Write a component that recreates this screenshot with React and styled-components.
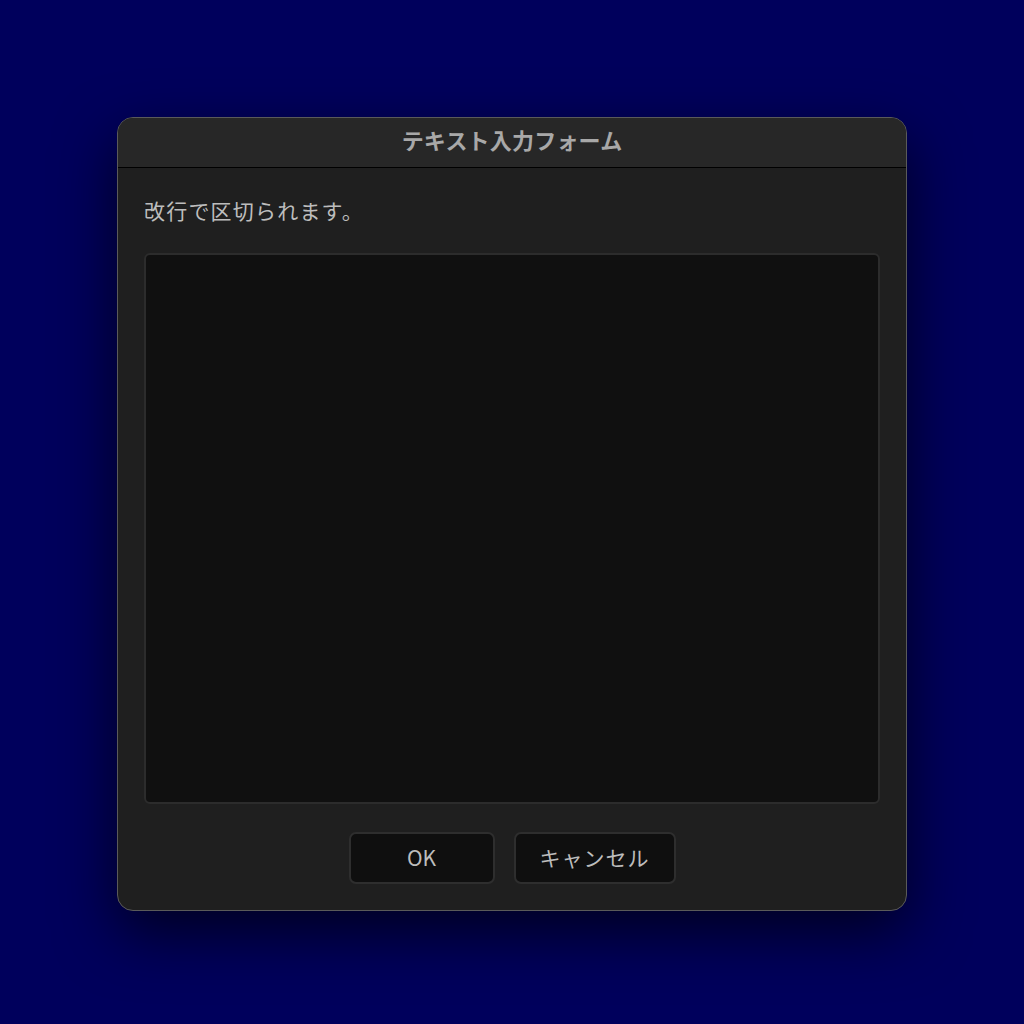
import React, { useState } from 'react';
import styled, { createGlobalStyle } from 'styled-components';

const GlobalStyle = createGlobalStyle`
    html, body {
        margin: 0;
        padding: 0;
        background: #00005c;
        font-family: "Noto Sans CJK JP", "Noto Sans", sans-serif;
    }
`;

const Screen = styled.div`
    min-height: 100vh;
    box-sizing: border-box;
    padding-top: 3px;
    display: flex;
    align-items: center;
    justify-content: center;
`;

const Dialog = styled.div`
    width: 790px;
    box-sizing: border-box;
    background: #1f1f1f;
    border: 1px solid #5a5a5a;
    border-radius: 16px;
    overflow: hidden;
    box-shadow: 0 22px 60px rgba(0, 0, 0, 0.65);
`;

const Header = styled.div`
    height: 50px;
    box-sizing: border-box;
    padding-bottom: 6px;
    display: flex;
    align-items: center;
    justify-content: center;
    background: #272727;
    border-bottom: 1px solid #000;
`;

const Title = styled.h1`
    margin: 0;
    font-size: 22px;
    font-weight: 700;
    color: #a8a8a8;
    letter-spacing: 0.2px;
`;

const Body = styled.div`
    padding: 30px 26px 26px;
    display: flex;
    flex-direction: column;
`;

const Hint = styled.p`
    margin: 0;
    font-size: 21px;
    line-height: 24px;
    letter-spacing: 1.2px;
    color: #bdbdbd;
`;

const TextBox = styled.textarea`
    margin-top: 31px;
    height: 551px;
    box-sizing: border-box;
    resize: none;
    background: #101010;
    border: 2px solid #2c2c2c;
    border-radius: 6px;
    color: #ddd;
    font: inherit;
    font-size: 18px;
    padding: 10px;
    outline: none;
`;

const Actions = styled.div`
    margin-top: 28px;
    display: flex;
    justify-content: center;
    gap: 19px;
`;

const Button = styled.button`
    width: ${p => p.$width}px;
    height: 52px;
    padding: 0 0 2px;
    background: #0f0f0f;
    border: 2px solid #2e2e2e;
    border-radius: 7px;
    color: #bdbdbd;
    font-family: inherit;
    font-size: 21px;
    letter-spacing: ${p => p.$spacing || 0}px;
    cursor: pointer;
`;

const App = () => {
    const [text, setText] = useState("");

    return (
        <>
            <GlobalStyle />
            <Screen>
                <Dialog>
                    <Header>
                        <Title>テキスト入力フォーム</Title>
                    </Header>
                    <Body>
                        <Hint>改行で区切られます。</Hint>
                        <TextBox value={text} onChange={e => setText(e.target.value)} />
                        <Actions>
                            <Button $width={146}>OK</Button>
                            <Button $width={162} $spacing={1}>キャンセル</Button>
                        </Actions>
                    </Body>
                </Dialog>
            </Screen>
        </>
    );
};

export default App;
